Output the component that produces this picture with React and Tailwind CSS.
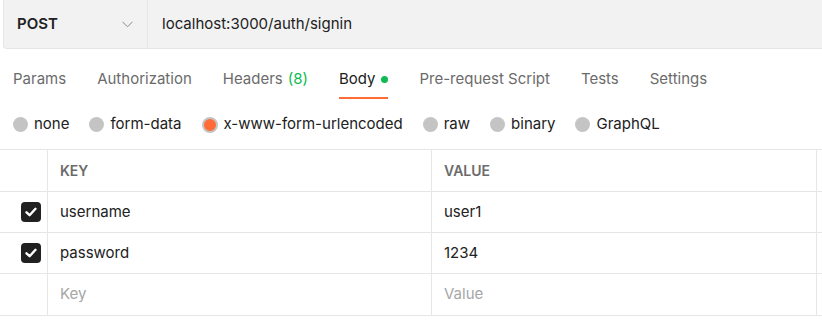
import React from "react";

const tabs = [
  { label: "Params" },
  { label: "Authorization" },
  { label: "Headers", count: "(8)" },
  { label: "Body", active: true },
  { label: "Pre-request Script" },
  { label: "Tests" },
  { label: "Settings" },
];

const bodyTypes = ["none", "form-data", "x-www-form-urlencoded", "raw", "binary", "GraphQL"];

const rows = [
  { key: "username", value: "user1" },
  { key: "password", value: "1234" },
];

function CheckBox() {
  return (
    <div className="w-5 h-5 rounded-[4px] bg-[#212121] flex items-center justify-center">
      <svg width="14" height="14" viewBox="0 0 14 14" fill="none">
        <path d="M2.5 7.3 L5.6 10.2 L11.5 3.8" stroke="white" strokeWidth="2.4" strokeLinecap="round" strokeLinejoin="round" />
      </svg>
    </div>
  );
}

export default function App() {
  return (
    <div
      className="w-[822px] h-[320px] bg-white overflow-hidden text-[#212121]"
      style={{ fontFamily: "Inter, 'Noto Sans', sans-serif" }}
    >
      {/* url bar */}
      <div className="h-[49px] ml-[3px] -mr-2 flex bg-[#f2f2f2] border border-t-0 border-[#e6e6e6] rounded-b-[4px]">
        <div className="w-[144px] flex items-center justify-between pl-[13px] pr-[14px] border-r border-[#e6e6e6]">
          <span className="text-[15px] font-semibold">POST</span>
          <svg width="11" height="7" viewBox="0 0 11 7" fill="none">
            <path d="M0.5 0.8 L5.5 5.8 L10.5 0.8" stroke="#8a8a8a" strokeWidth="1" />
          </svg>
        </div>
        <div className="flex items-center pl-[14px] text-[15px]">localhost:3000/auth/signin</div>
      </div>

      {/* tabs */}
      <div className="flex pl-[13px] gap-[31px] h-[51px] pt-[19px] text-[15px]">
        {tabs.map((t) => (
          <div key={t.label} className="flex flex-col">
            <div className={"flex items-center leading-[22px] " + (t.active ? "text-[#212121]" : "text-[#6b6b6b]")}>
              {t.label}
              {t.count && <span className="text-[#0cbb52] ml-[5px]">{t.count}</span>}
              {t.active && <span className="w-[7px] h-[7px] rounded-full bg-[#0cbb52] ml-[6px]" />}
            </div>
            {t.active && <div className="h-[2px] bg-[#ff6c37] mt-[7px]" />}
          </div>
        ))}
      </div>

      {/* body types */}
      <div className="flex items-center pl-[13px] gap-[20px] h-[49px] text-[15px]">
        {bodyTypes.map((b) => (
          <div key={b} className="flex items-center gap-[6px]">
            {b === "x-www-form-urlencoded" ? (
              <span className="w-4 h-4 rounded-full bg-[#ff6c37] border-2 border-[#c4c4c4]" />
            ) : (
              <span className="w-[15px] h-[15px] rounded-full bg-[#c4c4c4]" />
            )}
            <span>{b}</span>
          </div>
        ))}
      </div>

      {/* table */}
      <div className="border-t border-[#e6e6e6] w-[822px]">
        <div className="grid grid-cols-[48px_384px_385px_5px] h-[42px] border-b border-[#e6e6e6] text-[14px] font-semibold text-[#6b6b6b]">
          <div className="border-r border-[#e6e6e6]" />
          <div className="flex items-center pl-[12px] border-r border-[#e6e6e6]">KEY</div>
          <div className="flex items-center pl-[12px] border-r border-[#e6e6e6]">VALUE</div>
          <div />
        </div>
        {rows.map((r) => (
          <div key={r.key} className="grid grid-cols-[48px_384px_385px_5px] h-[41px] border-b border-[#e6e6e6] text-[15px]">
            <div className="flex items-center justify-end pr-[6px] border-r border-[#e6e6e6]">
              <CheckBox />
            </div>
            <div className="flex items-center pl-[12px] border-r border-[#e6e6e6]">{r.key}</div>
            <div className="flex items-center pl-[12px] border-r border-[#e6e6e6]">{r.value}</div>
            <div />
          </div>
        ))}
        <div className="grid grid-cols-[48px_384px_385px_5px] h-[42px] border-b border-[#e6e6e6] text-[15px] text-[#a6a6a6]">
          <div className="border-r border-[#e6e6e6]" />
          <div className="flex items-center pl-[12px] border-r border-[#e6e6e6]">Key</div>
          <div className="flex items-center pl-[12px] border-r border-[#e6e6e6]">Value</div>
          <div />
        </div>
      </div>
    </div>
  );
}
